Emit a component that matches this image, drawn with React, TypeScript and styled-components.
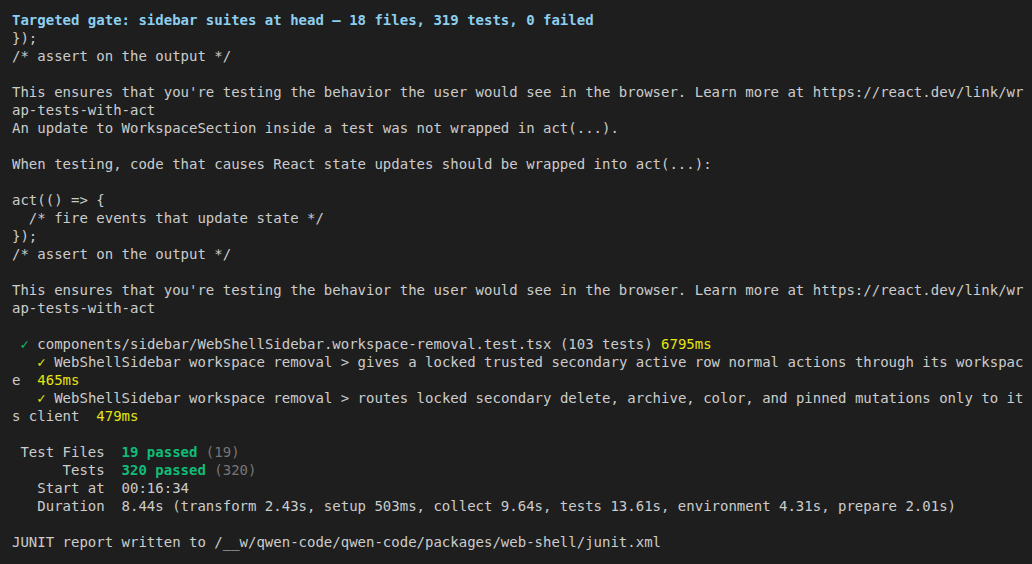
import React from "react";
import styled, { createGlobalStyle } from "styled-components";

const Global = createGlobalStyle`
  html, body { margin: 0; padding: 0; background: #1e1e1e; }
  body { width: 1032px; height: 564px; overflow: hidden; }
`;

const Terminal = styled.div`
  box-sizing: border-box;
  width: 1032px;
  height: 564px;
  background: #1e1e1e;
  padding: 11px 0 0 12px;
  font-family: "DejaVu Sans Mono", "Liberation Mono", monospace;
  font-size: 14px;
  line-height: 18px;
  color: #cccccc;
  display: flex;
  flex-direction: column;
`;

const Line = styled.div`
  height: 18px;
  white-space: pre;
`;

type Tone = "blue" | "green" | "yellow" | "dim";
const toneColor: Record<Tone, string> = {
  blue: "#8ccff0",
  green: "#10bc79",
  yellow: "#e5e510",
  dim: "#767676",
};

const Span = styled.span<{ $tone: Tone; $bold?: boolean }>`
  color: ${(p) => toneColor[p.$tone]};
  font-weight: ${(p) => (p.$bold ? 700 : 400)};
`;

const warning = [
  "This ensures that you're testing the behavior the user would see in the browser. Learn more at https://react.dev/link/wr",
  "ap-tests-with-act",
];

export default function App() {
  return (
    <>
      <Global />
      <Terminal>
        <Line>
          <Span $tone="blue" $bold>
            Targeted gate: sidebar suites at head — 18 files, 319 tests, 0 failed
          </Span>
        </Line>
        <Line>{"});"}</Line>
        <Line>{"/* assert on the output */"}</Line>
        <Line />
        <Line>{warning[0]}</Line>
        <Line>{warning[1]}</Line>
        <Line>An update to WorkspaceSection inside a test was not wrapped in act(...).</Line>
        <Line />
        <Line>When testing, code that causes React state updates should be wrapped into act(...):</Line>
        <Line />
        <Line>{"act(() => {"}</Line>
        <Line>{"  /* fire events that update state */"}</Line>
        <Line>{"});"}</Line>
        <Line>{"/* assert on the output */"}</Line>
        <Line />
        <Line>{warning[0]}</Line>
        <Line>{warning[1]}</Line>
        <Line />
        <Line>
          {" "}
          <Span $tone="green">✓</Span>
          {" components/sidebar/WebShellSidebar.workspace-removal.test.tsx (103 tests) "}
          <Span $tone="yellow">6795ms</Span>
        </Line>
        <Line>
          {"   "}
          <Span $tone="yellow">✓</Span>
          {" WebShellSidebar workspace removal > gives a locked trusted secondary active row normal actions through its workspac"}
        </Line>
        <Line>
          {"e  "}
          <Span $tone="yellow">465ms</Span>
        </Line>
        <Line>
          {"   "}
          <Span $tone="yellow">✓</Span>
          {" WebShellSidebar workspace removal > routes locked secondary delete, archive, color, and pinned mutations only to it"}
        </Line>
        <Line>
          {"s client  "}
          <Span $tone="yellow">479ms</Span>
        </Line>
        <Line />
        <Line>
          {" Test Files  "}
          <Span $tone="green" $bold>19 passed</Span>
          <Span $tone="dim"> (19)</Span>
        </Line>
        <Line>
          {"      Tests  "}
          <Span $tone="green" $bold>320 passed</Span>
          <Span $tone="dim"> (320)</Span>
        </Line>
        <Line>{"   Start at  00:16:34"}</Line>
        <Line>{"   Duration  8.44s (transform 2.43s, setup 503ms, collect 9.64s, tests 13.61s, environment 4.31s, prepare 2.01s)"}</Line>
        <Line />
        <Line>JUNIT report written to /__w/qwen-code/qwen-code/packages/web-shell/junit.xml</Line>
      </Terminal>
    </>
  );
}
